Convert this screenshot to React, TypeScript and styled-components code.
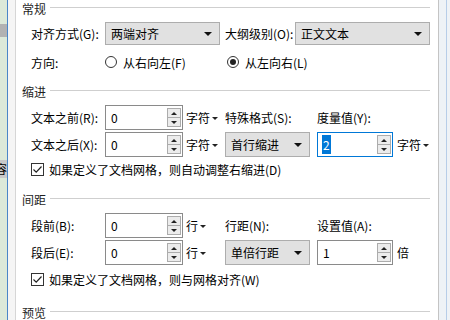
import styled, { createGlobalStyle } from "styled-components";

const Global = createGlobalStyle`
  html, body {
    margin: 0;
    padding: 0;
    background: #fff;
    overflow: hidden;
  }
  body {
    font-family: "Microsoft YaHei UI", "Noto Sans CJK SC", "Noto Sans", sans-serif;
    font-size: 12px;
    color: #000;
  }
`;

const Page = styled.div`
  display: flex;
  width: 450px;
  height: 320px;
  overflow: hidden;
`;

const LeftStrip = styled.div`
  width: 7px;
  background: #dce9d9;
  display: flex;
  flex-direction: column;
`;

const GreyBlock = styled.div`
  margin-top: 24px;
  height: 13px;
  background: #b2b2b2;
`;

const CutChar = styled.div`
  margin-top: 123px;
  height: 18px;
  background: #c9c9c9;
  overflow: hidden;
  line-height: 18px;
  white-space: nowrap;
  span {
    display: inline-block;
    margin-left: -5px;
  }
`;

const BlueRule = styled.div`
  width: 1px;
  background: #4a86c8;
`;

const FrameGap = styled.div`
  width: 7px;
  background: #f5f5f5;
  border-right: 1px solid #d6d6d6;
`;

const Dialog = styled.div`
  flex: 1;
  background: #fff;
  padding: 0 8px 0 6px;
  display: flex;
  flex-direction: column;
`;

const RightEdge = styled.div`
  width: 12px;
  box-sizing: border-box;
  border-left: 1px solid #c4c4c4;
  background: #eef2f6;
  display: flex;
  justify-content: flex-end;
  padding-right: 3px;
  &::after {
    content: "";
    width: 1px;
    background: #b7cde8;
  }
`;

const Heading = styled.div<{ $top: number }>`
  display: flex;
  align-items: center;
  gap: 4px;
  height: 16px;
  margin-top: ${(p) => p.$top}px;
  color: #1e1e1e;
  &::after {
    content: "";
    flex: 1;
    height: 1px;
    margin-top: -2px;
    background: #cfcfcf;
  }
`;

const Row = styled.div<{ $top: number; $height: number; $cols: string }>`
  display: grid;
  grid-template-columns: ${(p) => p.$cols};
  align-items: center;
  margin-top: ${(p) => p.$top}px;
  height: ${(p) => p.$height}px;
  padding-left: 9px;
  white-space: nowrap;
`;

const Label = styled.span<{ $pad?: number }>`
  padding-left: ${(p) => p.$pad ?? 0}px;
`;

const Select = styled.div<{ $width: number }>`
  width: ${(p) => p.$width}px;
  height: 100%;
  box-sizing: border-box;
  background: #e1e1e1;
  border: 1px solid #adadad;
  display: flex;
  align-items: center;
  justify-content: space-between;
  padding: 0 7px 0 5px;
  &::after {
    content: "";
    border-left: 4px solid transparent;
    border-right: 4px solid transparent;
    border-top: 4px solid #111;
  }
`;

const SpinBox = styled.div<{ $width: number; $focused?: boolean }>`
  width: ${(p) => p.$width}px;
  height: 100%;
  box-sizing: border-box;
  background: #fff;
  border: 1px solid ${(p) => (p.$focused ? "#0078d7" : "#8a8a8a")};
  display: flex;
  align-items: center;
  justify-content: space-between;
  padding: 2px 1px 2px 4px;
`;

const SpinValue = styled.span<{ $selected?: boolean }>`
  padding: 1px 1px;
  background: ${(p) => (p.$selected ? "#0078d7" : "transparent")};
  color: ${(p) => (p.$selected ? "#fff" : "#000")};
`;

const SpinButtons = styled.div`
  width: 14px;
  height: 100%;
  display: flex;
  flex-direction: column;
`;

const SpinHalf = styled.div<{ $down?: boolean }>`
  flex: 1;
  box-sizing: border-box;
  border: 1px solid #acacac;
  margin-top: ${(p) => (p.$down ? "-1px" : "0")};
  background: #ececec;
  display: flex;
  align-items: center;
  justify-content: center;
  &::after {
    content: "";
    border-left: 3px solid transparent;
    border-right: 3px solid transparent;
    ${(p) =>
      p.$down ? "border-top: 3px solid #222;" : "border-bottom: 3px solid #222;"}
  }
`;

const Unit = styled.span<{ $drop?: boolean; $pad: number }>`
  display: flex;
  align-items: center;
  padding-left: ${(p) => p.$pad}px;
  &::after {
    content: "";
    display: ${(p) => (p.$drop ? "block" : "none")};
    margin-left: 2px;
    margin-top: 1px;
    border-left: 3px solid transparent;
    border-right: 3px solid transparent;
    border-top: 3px solid #222;
  }
`;

const RadioOption = styled.span<{ $pad?: number }>`
  display: flex;
  align-items: center;
  gap: 6px;
  padding-left: ${(p) => p.$pad ?? 0}px;
`;

const RadioDot = styled.span<{ $checked?: boolean }>`
  width: 12px;
  height: 12px;
  box-sizing: border-box;
  border-radius: 50%;
  border: 1px solid #333;
  display: flex;
  align-items: center;
  justify-content: center;
  &::after {
    content: "";
    width: 6px;
    height: 6px;
    border-radius: 50%;
    background: #222;
    display: ${(p) => (p.$checked ? "block" : "none")};
  }
`;

const CheckLine = styled.div<{ $top: number }>`
  display: flex;
  align-items: center;
  gap: 5px;
  height: 18px;
  margin-top: ${(p) => p.$top}px;
  padding-left: 9px;
  white-space: nowrap;
`;

const CheckBox = styled.span`
  width: 13px;
  height: 13px;
  box-sizing: border-box;
  border: 1px solid #333;
  display: flex;
  align-items: center;
  justify-content: center;
`;

const Tick = () => (
  <svg width="11" height="11" viewBox="0 0 11 11">
    <path d="M1.5 5.5 L4.2 8.2 L9.5 2.5" fill="none" stroke="#222" strokeWidth="1.2" />
  </svg>
);

const Spin = ({ value, width = 78, focused }: { value: string; width?: number; focused?: boolean }) => (
  <SpinBox $width={width} $focused={focused}>
    <SpinValue $selected={focused}>{value}</SpinValue>
    <SpinButtons>
      <SpinHalf />
      <SpinHalf $down />
    </SpinButtons>
  </SpinBox>
);

const GENERAL = "74px 120px 70px 1fr";
const GRID = "74px 78px 42px 92px 76px 1fr";

export default function App() {
  return (
    <Page>
      <Global />
      <LeftStrip>
        <GreyBlock />
        <CutChar>
          <span>容</span>
        </CutChar>
      </LeftStrip>
      <BlueRule />
      <FrameGap />
      <Dialog>
        <Heading $top={0}>常规</Heading>
        <Row $top={6} $height={23} $cols={GENERAL}>
          <Label>对齐方式(G):</Label>
          <Select $width={115}>两端对齐</Select>
          <Label>大纲级别(O):</Label>
          <Select $width={135}>正文文本</Select>
        </Row>
        <Row $top={7} $height={20} $cols="74px 120px 1fr">
          <Label>方向:</Label>
          <RadioOption>
            <RadioDot />
            从右向左(F)
          </RadioOption>
          <RadioOption $pad={2}>
            <RadioDot $checked />
            从左向右(L)
          </RadioOption>
        </Row>

        <Heading $top={11}>缩进</Heading>
        <Row $top={6} $height={22} $cols={GRID}>
          <Label>文本之前(R):</Label>
          <Spin value="0" />
          <Unit $drop $pad={3}>字符</Unit>
          <Label>特殊格式(S):</Label>
          <Label>度量值(Y):</Label>
        </Row>
        <Row $top={5} $height={22} $cols={GRID}>
          <Label>文本之后(X):</Label>
          <Spin value="0" />
          <Unit $drop $pad={3}>字符</Unit>
          <Select $width={85}>首行缩进</Select>
          <Spin value="2" width={76} focused />
          <Unit $drop $pad={4}>字符</Unit>
        </Row>
        <CheckLine $top={6}>
          <CheckBox>
            <Tick />
          </CheckBox>
          如果定义了文档网格，则自动调整右缩进(D)
        </CheckLine>

        <Heading $top={13}>间距</Heading>
        <Row $top={6} $height={23} $cols={GRID}>
          <Label>段前(B):</Label>
          <Spin value="0" />
          <Unit $drop $pad={3}>行</Unit>
          <Label>行距(N):</Label>
          <Label>设置值(A):</Label>
        </Row>
        <Row $top={4} $height={23} $cols={GRID}>
          <Label>段后(E):</Label>
          <Spin value="0" />
          <Unit $drop $pad={3}>行</Unit>
          <Select $width={85}>单倍行距</Select>
          <Spin value="1" width={76} />
          <Unit $pad={4}>倍</Unit>
        </Row>
        <CheckLine $top={7}>
          <CheckBox>
            <Tick />
          </CheckBox>
          如果定义了文档网格，则与网格对齐(W)
        </CheckLine>

        <Heading $top={16}>预览</Heading>
      </Dialog>
      <RightEdge />
    </Page>
  );
}
